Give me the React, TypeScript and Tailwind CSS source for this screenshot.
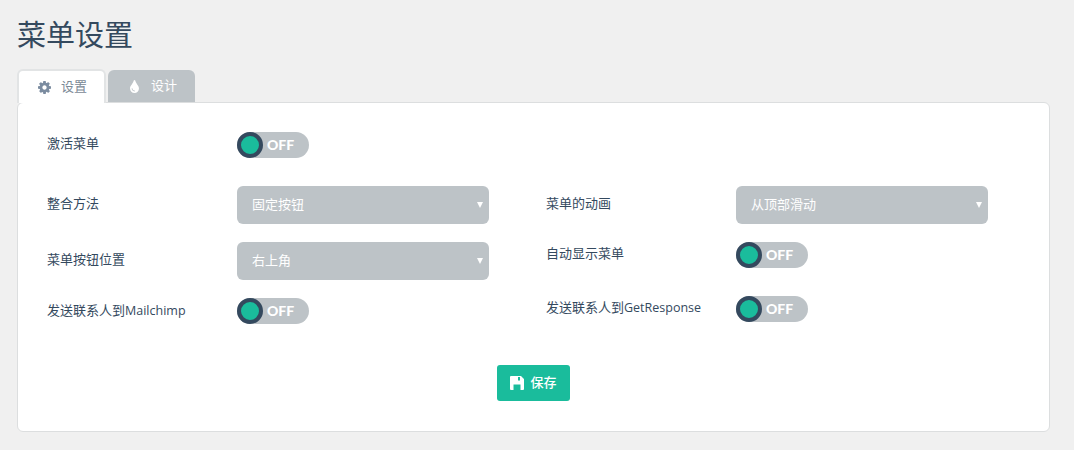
import { FaTint } from "react-icons/fa";

function Cog({ className }: { className: string }) {
  return (
    <svg viewBox="0 0 1536 1536" className={className} fill="currentColor">
      <path d="M1024 768q0-106-75-181t-181-75-181 75-75 181 75 181 181 75 181-75 75-181zm512-109v222q0 12-8 23t-20 13l-185 28q-19 54-39 91 35 50 107 138 10 12 10 25t-9 23q-27 37-99 108t-94 71q-12 0-26-9l-138-108q-44 23-91 38-16 136-29 186-7 28-36 28h-222q-14 0-24.500-8.500t-11.500-21.500l-28-184q-49-16-90-37l-141 107q-10 9-25 9-14 0-25-11-126-114-165-168-7-10-7-23 0-12 8-23 15-21 51-66.500t54-70.500q-27-50-41-99l-183-27q-13-2-21-12.500t-8-23.500v-222q0-12 8-23t19-13l186-28q14-46 39-92-40-57-107-138-10-12-10-24 0-10 9-23 26-36 98.500-107.500t94.500-71.500q13 0 26 10l138 107q44-23 91-38 16-136 29-186 7-28 36-28h222q14 0 24.500 8.500t11.500 21.500l28 184q49 16 90 37l142-107q9-9 24-9 13 0 25 10 129 119 165 170 7 8 7 22 0 12-8 23-15 21-51 66.500t-54 70.500q26 50 41 98l183 28q13 2 21 12.500t8 23.500z" />
    </svg>
  );
}
function Floppy({ className }: { className: string }) {
  return (
    <svg viewBox="0 0 14 14" className={className} fill="currentColor" fillRule="evenodd">
      <path d="M1 0h10l3 3v10a1 1 0 0 1-1 1H1a1 1 0 0 1-1-1V1a1 1 0 0 1 1-1zM3.500 8.500V14h7V8.500zM8 1v3.500h2V1z" />
    </svg>
  );
}
function Toggle() {
  return (
    <div className="flex h-[26px] w-[72px] items-center rounded-[13px] bg-[#bdc3c7]">
      <div className="h-[26px] w-[26px] rounded-full border-[4px] border-[#34495e] bg-[#1abc9c]" />
      <span className="ml-[4px] font-['Lato',sans-serif] text-[14px] font-black leading-none text-white">OFF</span>
    </div>
  );
}
function Select({ text }: { text: string }) {
  return (
    <div className="flex h-[38px] w-[252px] items-center justify-between rounded-[6px] bg-[#bdc3c7] pl-[15px] pr-[6px] text-[13px] text-white">
      <span>{text}</span>
      <span className="h-0 w-0 border-x-[3px] border-t-[6px] border-x-transparent border-t-white" />
    </div>
  );
}
function Row({ label, latin, children, cls, labelCls }: { label: string; latin?: string; children: React.ReactNode; cls: string; labelCls: string }) {
  return (
    <div className={"flex items-start " + cls}>
      <div className={"w-[190px] font-['Open_Sans','Noto_Sans_CJK_SC',sans-serif] text-[13px] leading-[18px] text-[#34495e] " + labelCls}>
        {label}
        {latin && <span className="text-[12.5px]">{latin}</span>}
      </div>
      {children}
    </div>
  );
}
export default function App() {
  return (
    <div className="h-[450px] overflow-hidden bg-[#f0f0f0] pl-[17px] pr-[24px] pt-[15px] font-['Lato','Noto_Sans_CJK_SC',sans-serif] text-[#34495e]">
      <h1 className="h-[40px] text-[29px] font-normal leading-[40px] text-[#34495e]">菜单设置</h1>
      <div className="mt-[14px] flex h-[33px] items-end">
        <div className="relative z-10 flex h-[34px] w-[89px] translate-y-[1px] items-center rounded-t-[6px] border-2 border-b-0 border-[#e2e4e5] bg-white pl-[19px] text-[13px] text-[#7b8996]">
          <Cog className="h-[13px] w-[13px] text-[#7b8ca0]" />
          <span className="ml-[10px]">设置</span>
        </div>
        <div className="ml-[2px] flex h-[32px] w-[87px] items-center rounded-t-[6px] bg-[#bdc3c7] pl-[20px] text-[13px] text-white">
          <FaTint className="h-[13px] w-[13px]" />
          <span className="ml-[10px]">设计</span>
        </div>
      </div>
      <div className="h-[330px] w-[1033px] rounded-[6px] border border-[#dcdedf] bg-white pl-[29px] pt-[29px]">
        <Row label="激活菜单" cls="h-[26px]" labelCls="pt-[2px]"><Toggle /></Row>
        <div className="mt-[28px] flex gap-[57px]">
          <div className="flex flex-col">
            <Row label="整合方法" cls="" labelCls="pt-[8px]"><Select text="固定按钮" /></Row>
            <Row label="菜单按钮位置" cls="mt-[18px]" labelCls="pt-[8px]"><Select text="右上角" /></Row>
            <Row label="发送联系人到" latin="Mailchimp" cls="mt-[18px]" labelCls="pt-[3px]"><Toggle /></Row>
          </div>
          <div className="flex flex-col">
            <Row label="菜单的动画" cls="" labelCls="pt-[8px]"><Select text="从顶部滑动" /></Row>
            <Row label="自动显示菜单" cls="mt-[18px]" labelCls="pt-[2px]"><Toggle /></Row>
            <Row label="发送联系人到" latin="GetResponse" cls="mt-[28px]" labelCls="pt-[2px]"><Toggle /></Row>
          </div>
        </div>
        <div className="mt-[41px] flex justify-center pr-[29px]">
          <button className="flex h-[36px] w-[73px] items-center justify-center rounded-[3px] bg-[#1abc9c] text-[13px] font-medium text-white">
            <Floppy className="mr-[6px] h-[14px] w-[14px]" />
            保存
          </button>
        </div>
      </div>
    </div>
  );
}
